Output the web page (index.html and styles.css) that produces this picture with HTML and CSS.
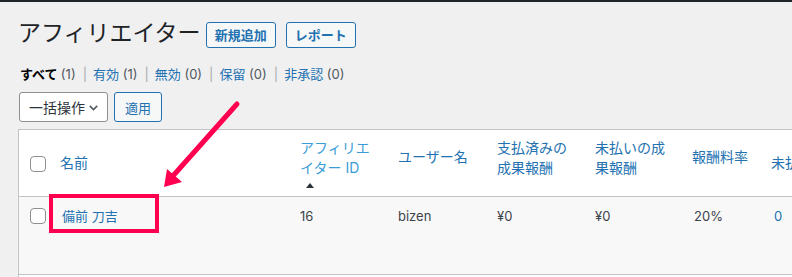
FILE: index.html
```html
<!DOCTYPE html>
<html lang="ja">
<head>
<meta charset="utf-8">
<title>アフィリエイター</title>
<link rel="stylesheet" href="styles.css">
</head>
<body>
<div class="adminbar"></div>
<div class="wrap">
  <div class="heading">
    <h1>アフィリエイター</h1>
    <a class="title-action">新規追加</a>
    <a class="title-action">レポート</a>
  </div>
  <ul class="views">
    <li><a class="current">すべて <span class="count">(1)</span></a></li>
    <li class="sep">|</li>
    <li><a>有効</a> <span class="count">(1)</span></li>
    <li class="sep">|</li>
    <li><a>無効</a> <span class="count">(0)</span></li>
    <li class="sep">|</li>
    <li><a>保留</a> <span class="count">(0)</span></li>
    <li class="sep">|</li>
    <li><a>非承認</a> <span class="count">(0)</span></li>
  </ul>
  <div class="bulk">
    <div class="select">
      <span>一括操作</span>
      <svg class="chev" width="9" height="6" viewBox="0 0 9 6"><path d="M0.8 0.9 L4.5 4.6 L8.2 0.9" fill="none" stroke="#50575e" stroke-width="1.5"/></svg>
    </div>
    <a class="button">適用</a>
  </div>
  <table class="list">
    <thead>
      <tr class="head">
        <th class="c-cb"><input type="checkbox" class="cb"></th>
        <th class="c-name"><a>名前</a></th>
        <th class="c-id"><a class="sorted">アフィリエイター ID</a><span class="sort-ind"></span></th>
        <th class="c-user"><a>ユーザー名</a></th>
        <th class="c-paid"><a>支払済みの成果報酬</a></th>
        <th class="c-unpaid"><a>未払いの成果報酬</a></th>
        <th class="c-rate"><a>報酬料率</a></th>
        <th class="c-last"><a>未払いの紹介数</a></th>
      </tr>
    </thead>
    <tbody>
      <tr class="row">
        <td class="c-cb"><input type="checkbox" class="cb"></td>
        <td class="c-name"><a>備前 刀吉</a></td>
        <td class="c-id">16</td>
        <td class="c-user">bizen</td>
        <td class="c-paid">¥0</td>
        <td class="c-unpaid">¥0</td>
        <td class="c-rate">20%</td>
        <td class="c-last"><a>0</a></td>
      </tr>
    </tbody>
    <tfoot>
      <tr class="foot">
        <th></th><th></th><th></th><th></th><th></th><th></th><th></th><th></th>
      </tr>
    </tfoot>
  </table>
</div>
<div class="highlight"></div>
<svg class="arrow" width="792" height="277" viewBox="0 0 792 277">
  <line x1="237" y1="104" x2="172" y2="177" stroke="#ff0050" stroke-width="5" stroke-linecap="round"/>
  <polygon points="164,187 167,169 182,182" fill="#ff0050"/>
</svg>
</body>
</html>
```

FILE: styles.css
```css
html, body {
  margin: 0;
  overflow: hidden;
}
body {
  position: relative;
  width: 792px;
  height: 277px;
  background: #f0f0f1;
  font-family: Inter, "Noto Sans CJK JP", sans-serif;
  color: #3c434a;
}
a {
  color: #2271b1;
  text-decoration: none;
}
.adminbar {
  height: 2px;
  background: #1d2327;
}
.wrap {
  padding-left: 18px;
}
.heading {
  display: flex;
  align-items: flex-start;
  padding-top: 16px;
}
h1 {
  margin: 0;
  font-size: 23px;
  font-weight: 400;
  line-height: 30px;
  color: #1d2327;
}
.title-action {
  margin-left: 5px;
  margin-top: 4px;
  height: 26px;
  box-sizing: border-box;
  border: 1px solid #2271b1;
  border-radius: 3px;
  background: #f6f7f7;
  color: #2271b1;
  font-size: 13px;
  font-weight: 600;
  line-height: 24px;
  padding: 0 8px;
}
.title-action + .title-action {
  margin-left: 10px;
}
.views {
  display: flex;
  list-style: none;
  margin: 16px 0 0 2px;
  padding: 0;
  font-size: 13px;
  line-height: 20px;
  color: #646970;
}
.views .current {
  color: #000;
  font-weight: 600;
}
.views .count {
  color: #50575e;
  font-weight: 400;
}
.views .sep {
  padding: 0 6px 0 7px;
  color: #a7aaad;
}
.bulk {
  display: flex;
  gap: 6px;
  margin: 8px 0 0 1px;
}
.select {
  display: flex;
  align-items: center;
  gap: 4px;
  height: 30px;
  box-sizing: border-box;
  padding: 0 9px;
  border: 1px solid #8c8f94;
  border-radius: 3px;
  background: #fff;
  font-size: 14px;
  color: #2c3338;
}
.chev {
  margin-top: 1px;
}
.button {
  display: flex;
  align-items: center;
  height: 30px;
  box-sizing: border-box;
  padding: 0 10px;
  border: 1px solid #2271b1;
  border-radius: 3px;
  background: #f6f7f7;
  font-size: 13px;
  color: #2271b1;
}
.list {
  margin-top: 7px;
  border: 1px solid #c3c4c7;
  border-spacing: 0;
  table-layout: fixed;
  width: 892px;
  background: #fff;
}
.list th,
.list td {
  box-sizing: border-box;
  vertical-align: top;
  text-align: left;
  padding: 0 8px 0 8px;
  font-weight: 400;
}
.list thead th {
  font-size: 14px;
  line-height: 20px;
  border-bottom: 1px solid #c3c4c7;
}
.head {
  height: 67px;
}
.c-cb { width: 33px; }
.c-name { width: 240px; }
.c-id { width: 98px; }
.c-user { width: 99px; }
.c-paid { width: 98px; }
.c-unpaid { width: 97px; }
.c-rate { width: 79px; }
.c-last { width: 148px; }
.list .c-cb { padding-left: 11px; padding-right: 0; }
thead .c-cb { padding-top: 26px; }
thead .c-name { padding-top: 23px; }
thead .c-id { padding-top: 8px; }
thead .c-user { padding-top: 17px; }
thead .c-paid { padding-top: 8px; }
thead .c-unpaid { padding-top: 8px; }
thead .c-rate { padding-top: 17px; }
thead .c-last { padding-top: 23px; white-space: nowrap; }
.sorted {
  color: #3b9dd6;
}
.sort-ind {
  display: block;
  width: 0;
  height: 0;
  margin: 5px 0 0 6px;
  border-left: 4px solid transparent;
  border-right: 4px solid transparent;
  border-bottom: 5px solid #2c3338;
}
.row {
  height: 77px;
  background: #f8f8f8;
}
.row td {
  font-size: 13px;
  line-height: 20px;
  padding-top: 9px;
}
.row .c-cb { padding-top: 11px; }
.row .c-name { padding-left: 10px; }
.row .c-rate { padding-left: 10px; }
.row .c-last { padding-left: 11px; }
.cb {
  appearance: none;
  -webkit-appearance: none;
  display: block;
  margin: 0;
  width: 16px;
  height: 16px;
  box-sizing: border-box;
  border: 1px solid #8c8f94;
  border-radius: 4px;
  background: #fff;
}
.foot {
  height: 40px;
}
.foot th {
  border-top: 1px solid #c3c4c7;
}
.highlight {
  position: absolute;
  left: 49px;
  top: 194px;
  width: 110px;
  height: 39px;
  box-sizing: border-box;
  border: 4px solid #ff0050;
}
.arrow {
  position: absolute;
  left: 0;
  top: 0;
  pointer-events: none;
}
```
